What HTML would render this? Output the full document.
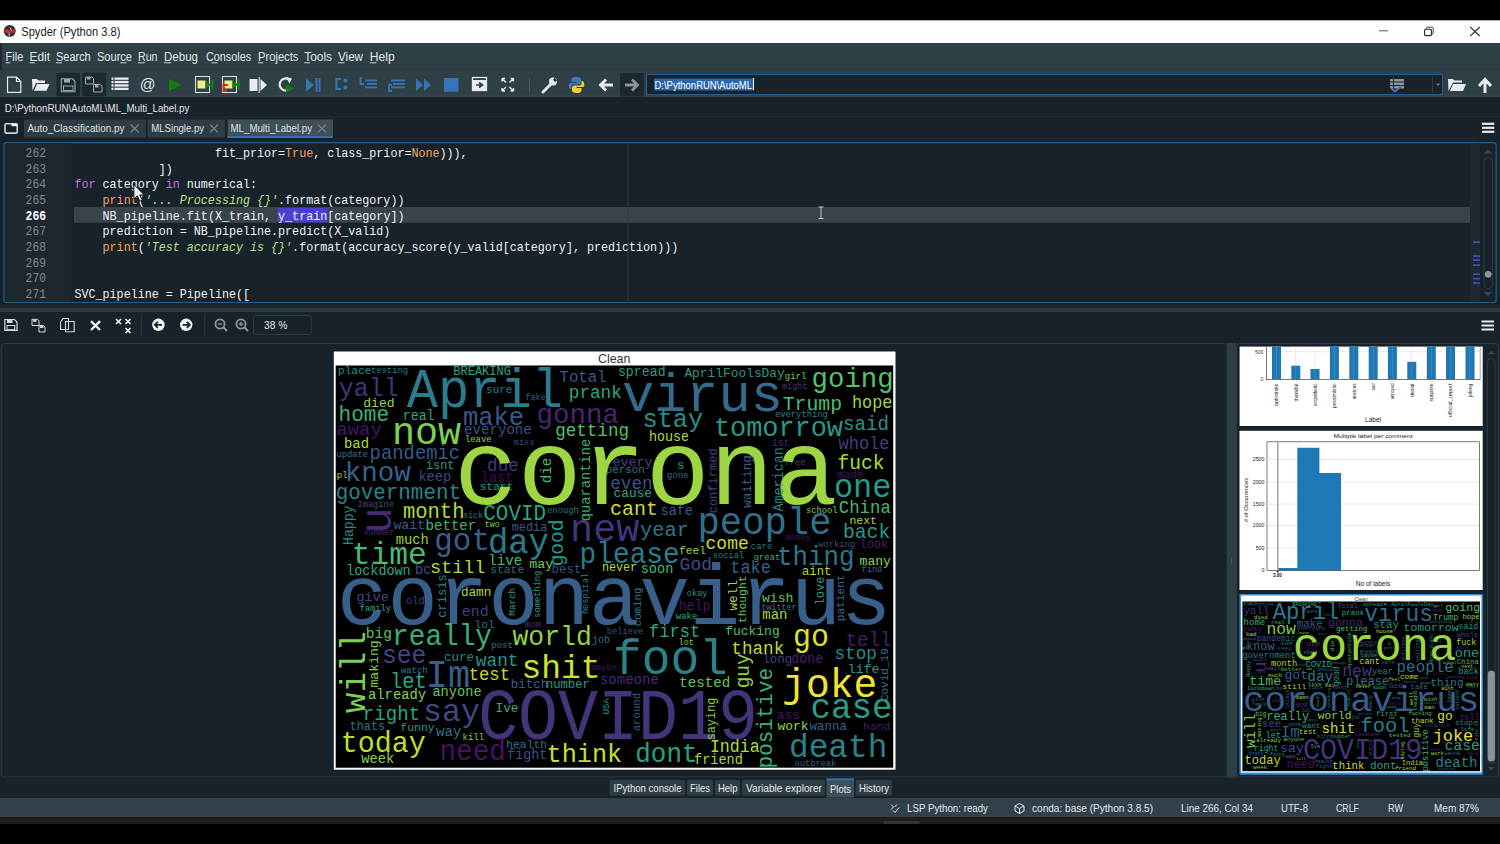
<!DOCTYPE html>
<html><head><meta charset="utf-8"><title>Spyder</title>
<style>
*{margin:0;padding:0}
html,body{width:1500px;height:844px;overflow:hidden;background:#000}
svg{display:block}
text{white-space:pre}
</style></head><body>
<svg width="1500" height="844" viewBox="0 0 1500 844">
<rect x="0" y="0" width="1500" height="20" fill="#000" />
<rect x="0" y="20" width="1500" height="23" fill="#fff" />
<circle cx="9.7" cy="31" r="6" fill="#303030"/>
<path d="M4 30 Q6 28.6 8.5 29.5 L11.5 31.6 L14.5 28.8 Q15.8 29.8 15.7 31.5 Q14.5 33 11.8 32.8 L9.8 32.6 L6.5 33.2 Q4.6 32.6 4 30 Z" fill="#d42a20"/>
<path d="M10 27.3 L11.9 31 M9 32.6 L9.4 36.5" stroke="#d8d8d8" stroke-width="0.9"/>
<text x="21.20" y="36.00" font-size="12.5" fill="#1a1a1a" font-family='"Liberation Sans",sans-serif' textLength="99.30" lengthAdjust="spacingAndGlyphs" >Spyder (Python 3.8)</text>
<rect x="0" y="20" width="1500" height="0.8" fill="#9a9a9a" />
<rect x="1379" y="30.3" width="9.2" height="1" fill="#555" />
<rect x="1424.6" y="29.2" width="6.8" height="6.4" rx="1" fill="none" stroke="#222" stroke-width="1.1"/>
<path d="M1426.2 28.6 V28 Q1426.2 27.2 1427.2 27.2 H1432 Q1433.2 27.2 1433.2 28.4 V33 Q1433.2 34 1432 34" fill="none" stroke="#444" stroke-width="1"/>
<path d="M1470.2 27 L1479.8 36 M1479.8 27 L1470.2 36" stroke="#333" stroke-width="1.1"/>
<rect x="0" y="43" width="1500" height="26.5" fill="#2f3f46" />
<rect x="0" y="43" width="2" height="26.5" fill="#1f2a30" />
<rect x="0" y="69" width="1500" height="1" fill="#26343a" />
<text x="5.60" y="60.70" font-size="12" fill="#e4e7e9" font-family='"Liberation Sans",sans-serif' textLength="17.70" lengthAdjust="spacingAndGlyphs" >File</text>
<rect x="5.6" y="62.3" width="4.6" height="1" fill="#c9ced1" />
<text x="29.60" y="60.70" font-size="12" fill="#e4e7e9" font-family='"Liberation Sans",sans-serif' textLength="20.40" lengthAdjust="spacingAndGlyphs" >Edit</text>
<rect x="29.6" y="62.3" width="5.4" height="1" fill="#c9ced1" />
<text x="56.00" y="60.70" font-size="12" fill="#e4e7e9" font-family='"Liberation Sans",sans-serif' textLength="34.70" lengthAdjust="spacingAndGlyphs" >Search</text>
<rect x="56.0" y="62.3" width="6.1" height="1" fill="#c9ced1" />
<text x="97.00" y="60.70" font-size="12" fill="#e4e7e9" font-family='"Liberation Sans",sans-serif' textLength="35.00" lengthAdjust="spacingAndGlyphs" >Source</text>
<rect x="120.3" y="62.3" width="6.1" height="1" fill="#c9ced1" />
<text x="138.00" y="60.70" font-size="12" fill="#e4e7e9" font-family='"Liberation Sans",sans-serif' textLength="19.50" lengthAdjust="spacingAndGlyphs" >Run</text>
<rect x="138.0" y="62.3" width="6.8" height="1" fill="#c9ced1" />
<text x="164.00" y="60.70" font-size="12" fill="#e4e7e9" font-family='"Liberation Sans",sans-serif' textLength="34.00" lengthAdjust="spacingAndGlyphs" >Debug</text>
<rect x="164.0" y="62.3" width="7.1" height="1" fill="#c9ced1" />
<text x="205.90" y="60.70" font-size="12" fill="#e4e7e9" font-family='"Liberation Sans",sans-serif' textLength="45.40" lengthAdjust="spacingAndGlyphs" >Consoles</text>
<rect x="211.6" y="62.3" width="6.0" height="1" fill="#c9ced1" />
<text x="258.00" y="60.70" font-size="12" fill="#e4e7e9" font-family='"Liberation Sans",sans-serif' textLength="40.40" lengthAdjust="spacingAndGlyphs" >Projects</text>
<rect x="258.0" y="62.3" width="5.3" height="1" fill="#c9ced1" />
<text x="304.20" y="60.70" font-size="12" fill="#e4e7e9" font-family='"Liberation Sans",sans-serif' textLength="27.80" lengthAdjust="spacingAndGlyphs" >Tools</text>
<rect x="304.2" y="62.3" width="5.8" height="1" fill="#c9ced1" />
<text x="338.00" y="60.70" font-size="12" fill="#e4e7e9" font-family='"Liberation Sans",sans-serif' textLength="25.00" lengthAdjust="spacingAndGlyphs" >View</text>
<rect x="338.0" y="62.3" width="6.6" height="1" fill="#c9ced1" />
<text x="369.80" y="60.70" font-size="12" fill="#e4e7e9" font-family='"Liberation Sans",sans-serif' textLength="24.80" lengthAdjust="spacingAndGlyphs" >Help</text>
<rect x="369.8" y="62.3" width="6.5" height="1" fill="#c9ced1" />
<rect x="0" y="70" width="1500" height="27" fill="#2f3f46" />
<rect x="0" y="94.5" width="1500" height="2.5" fill="#34424a" />
<path d="M7.5 77.2 H16.5 L20.8 81.5 V92.3 H7.5 Z M16.5 77.2 V81.5 H20.8" fill="none" stroke="#e8ecee" stroke-width="1.2"/>
<path d="M32 79 H37 L38.5 80.5 H45 V83 H36 L32.5 90.8 Z" fill="#e8ecee"/><path d="M34 90.8 L37 84 H49.6 L46.5 90.8 Z" fill="#e8ecee"/>
<rect x="56.5" y="72.7" width="23.5" height="23.8" rx="2" fill="#1c2830"/>
<rect x="82.3" y="72.7" width="23.8" height="23.8" rx="2" fill="#1c2830"/>
<path d="M61.3 78.8 H72.5 L75 81.3 V91.7 H61.3 Z" fill="none" stroke="#9ea7ac" stroke-width="1.1"/><rect x="64" y="79" width="6" height="3.5" fill="#9ea7ac"/><rect x="63.5" y="86" width="9.5" height="4.5" fill="none" stroke="#9ea7ac" stroke-width="1"/>
<path d="M85.5 77 H92 L93.5 78.5 V84 H85.5 Z M93.5 84.5 H100.5 L102 86 V92 H93.5 Z" fill="none" stroke="#9ea7ac" stroke-width="1"/><rect x="87" y="77" width="3.5" height="2.5" fill="#9ea7ac"/><rect x="95" y="85" width="3.5" height="2.5" fill="#9ea7ac"/>
<rect x="111.5" y="77.5" width="2" height="2.3" fill="#e8ecee" />
<rect x="114.5" y="77.5" width="14" height="2.3" fill="#e8ecee" />
<rect x="111.5" y="80.9" width="2" height="2.3" fill="#e8ecee" />
<rect x="114.5" y="80.9" width="14" height="2.3" fill="#e8ecee" />
<rect x="111.5" y="84.3" width="2" height="2.3" fill="#e8ecee" />
<rect x="114.5" y="84.3" width="14" height="2.3" fill="#e8ecee" />
<rect x="111.5" y="87.7" width="2" height="2.3" fill="#e8ecee" />
<rect x="114.5" y="87.7" width="14" height="2.3" fill="#e8ecee" />
<text x="139.80" y="90.00" font-size="16.5" fill="#dfe3e5" font-family='"Liberation Sans",sans-serif' textLength="15.80" lengthAdjust="spacingAndGlyphs" >@</text>
<path d="M169 79 L182 85 L169 91 Z" fill="#12800e"/>
<rect x="195.5" y="76.5" width="14" height="16" fill="none" stroke="#d8dcdc" stroke-width="1.1"/><rect x="197.5" y="80.5" width="8" height="8" fill="#f5e98a"/><path d="M205.5 80.5 L211 84.5 L205.5 88.5 Z" fill="#12800e"/><rect x="211.5" y="79.5" width="2" height="10" fill="#12800e"/>
<rect x="222.5" y="76.5" width="14" height="16" fill="none" stroke="#d8dcdc" stroke-width="1.1"/><rect x="224.5" y="80.5" width="8" height="8" fill="#f5e98a"/><path d="M232.5 80.5 L238 84.5 L232.5 88.5 Z" fill="#12800e"/><rect x="238" y="79.5" width="2" height="10" fill="#12800e"/><path d="M228 85 H223.5 V91 H227" fill="none" stroke="#e8221a" stroke-width="2"/>
<rect x="249.5" y="79" width="8" height="12" fill="#e8ecee"/><rect x="258.5" y="77" width="1.5" height="16" fill="#b0b8bb"/><path d="M260.5 79 L267 85 L260.5 91 Z" fill="#e8ecee"/>
<path d="M289 79.5 A6 6 0 1 0 290.5 88" fill="none" stroke="#e8ecee" stroke-width="2.2"/><path d="M286 77 L292 78.5 L289.5 83.5 Z" fill="#e8ecee"/><path d="M286 84.5 L294 88.5 L286 92.5 Z" fill="#12800e"/>
<path d="M306 78.5 L314 85 L306 91.5 Z" fill="#3574b5"/><rect x="315.5" y="78" width="2" height="14" fill="#3574b5"/><rect x="318.5" y="78" width="2" height="14" fill="#3574b5"/>
<path d="M341 79 H336.5 V89 H341" fill="none" stroke="#3574b5" stroke-width="2.2"/><circle cx="345.5" cy="80.5" r="2" fill="#3574b5"/><circle cx="345.5" cy="87.5" r="2" fill="#3574b5"/>
<path d="M362 78 H360.5 V84 H364" fill="none" stroke="#3574b5" stroke-width="1.8"/><rect x="365" y="79.5" width="12" height="1.8" fill="#3574b5"/><rect x="367" y="83" width="10" height="1.8" fill="#3574b5"/><rect x="365" y="86.5" width="12" height="1.8" fill="#3574b5"/>
<rect x="391" y="79.5" width="14" height="1.8" fill="#3574b5"/><rect x="393" y="83" width="12" height="1.8" fill="#3574b5"/><rect x="391" y="86.5" width="14" height="1.8" fill="#3574b5"/><path d="M392 85 H389 V91 H392" fill="none" stroke="#3574b5" stroke-width="1.8"/>
<path d="M416 78.5 L423 85 L416 91.5 Z M424 78.5 L431 85 L424 91.5 Z" fill="#3574b5"/>
<rect x="444" y="78" width="14.5" height="13.8" fill="#3574b5" />
<rect x="472.5" y="77.5" width="14" height="13" fill="none" stroke="#e8ecee" stroke-width="1.3"/><rect x="473" y="80" width="13" height="10.5" fill="#e8ecee"/><path d="M476 85 H481 M479 82.5 L482.5 85 L479 87.5" fill="none" stroke="#2f3f46" stroke-width="1.6"/>
<path d="M502 78.5 L506 82.5 M502 78.5 H505 M502 78.5 V81.5 M513.5 78.5 L509.5 82.5 M513.5 78.5 H510.5 M513.5 78.5 V81.5 M502 91 L506 87 M502 91 H505 M502 91 V88 M513.5 91 L509.5 87 M513.5 91 H510.5 M513.5 91 V88" fill="none" stroke="#e8ecee" stroke-width="1.4"/>
<rect x="529" y="78" width="1" height="14" fill="#4a5a62" />
<path d="M543 92 L551 84" stroke="#e8ecee" stroke-width="3" stroke-linecap="round"/><circle cx="553" cy="81.5" r="4" fill="#e8ecee"/><path d="M554.5 77.5 L557.5 80.5 L555 82 L553 80 Z" fill="#2f3f46"/>
<path d="M576.5 77 C572 77 571.5 78.5 571.5 80 V82 H576.5 V83 H570 C568.5 83 568.5 85.5 569 87 C569.5 88.5 570 89 571.5 89 V86.5 C571.5 85 573 84.5 574 84.5 H578.5 C580 84.5 581 83.5 581 82 V79.5 C581 78 579.5 77 576.5 77 Z" fill="#3d7ab8"/><path d="M576.5 93 C581 93 581.5 91.5 581.5 90 V88 H576.5 V87 H583 C584.5 87 584.5 84.5 584 83 C583.5 81.5 583 81 581.5 81 V83.5 C581.5 85 580 85.5 579 85.5 H574.5 C573 85.5 572 86.5 572 88 V90.5 C572 92 573.5 93 576.5 93 Z" fill="#f2cc3a"/>
<path d="M613 85 H601 M606 79.5 L600.5 85 L606 90.5" fill="none" stroke="#e8ecee" stroke-width="2.8"/>
<rect x="620" y="73" width="24" height="23.5" rx="2" fill="#1c2830"/>
<path d="M625 85 H637 M632 79.5 L637.5 85 L632 90.5" fill="none" stroke="#8c9599" stroke-width="2.8"/>
<rect x="646.5" y="74.5" width="796" height="20" rx="2" fill="#18222a" stroke="#1e5f8f" stroke-width="1.2"/>
<rect x="654" y="78.5" width="100" height="12" fill="#2867b0" />
<text x="654.50" y="88.50" font-size="11" fill="#ffffff" font-family='"Liberation Sans",sans-serif' textLength="97.50" lengthAdjust="spacingAndGlyphs" >D:\PythonRUN\AutoML</text>
<rect x="753" y="78" width="1" height="12" fill="#ffffff" />
<rect x="1390" y="79.0" width="3" height="2.5" fill="#8c9599" />
<rect x="1394" y="79.0" width="10" height="2.5" fill="#8c9599" />
<rect x="1390" y="82.5" width="3" height="2.5" fill="#8c9599" />
<rect x="1394" y="82.5" width="10" height="2.5" fill="#8c9599" />
<rect x="1390" y="86.0" width="3" height="2.5" fill="#8c9599" />
<rect x="1394" y="86.0" width="10" height="2.5" fill="#8c9599" />
<path d="M1391 88 L1395 91.5 L1402 85.5" fill="none" stroke="#3a7bc0" stroke-width="1.8"/>
<rect x="1432" y="76" width="1" height="17" fill="#2c3a42" />
<path d="M1435.5 83.5 L1440.5 83.5 L1438 86 Z" fill="#6c777c"/>
<path d="M1448 79 H1453 L1454.5 80.5 H1462 V82.5 H1453 L1448.5 91 Z" fill="#e8ecee"/><path d="M1450 91 L1453 84 H1466 L1463 91 Z" fill="#e8ecee"/>
<path d="M1485 93 V80 M1479 86 L1485 79.5 L1491 86" fill="none" stroke="#e8ecee" stroke-width="3"/>
<rect x="0" y="97" width="1500" height="20" fill="#18222a" />
<text x="4.70" y="112.30" font-size="11" fill="#e4e7e9" font-family='"Liberation Sans",sans-serif' textLength="184.60" lengthAdjust="spacingAndGlyphs" >D:\PythonRUN\AutoML\ML_Multi_Label.py</text>
<rect x="0" y="117" width="1500" height="25.5" fill="#18222a" />
<rect x="0" y="116.5" width="1500" height="1" fill="#222e36" />
<rect x="0" y="118" width="23.4" height="21" rx="3" fill="#17212a"/>
<rect x="5" y="123.8" width="12.2" height="9.3" rx="1.2" fill="none" stroke="#cdd1d4" stroke-width="1.6"/><rect x="11.5" y="123.6" width="5.8" height="2.6" fill="#f0f2f3"/>
<rect x="24" y="119.5" width="122" height="18" fill="#2e3d45"/>
<text x="27.50" y="132.20" font-size="11" fill="#dfe3e6" font-family='"Liberation Sans",sans-serif' textLength="96.90" lengthAdjust="spacingAndGlyphs" >Auto_Classification.py</text>
<path d="M130.7 124.5 L138.8 132.5 M138.8 124.5 L130.7 132.5" stroke="#76828a" stroke-width="1.1"/>
<rect x="147.5" y="119.5" width="77.5" height="18" fill="#2e3d45"/>
<text x="151.20" y="132.20" font-size="11" fill="#dfe3e6" font-family='"Liberation Sans",sans-serif' textLength="53.00" lengthAdjust="spacingAndGlyphs" >MLSingle.py</text>
<path d="M210 124.5 L218 132.5 M218 124.5 L210 132.5" stroke="#76828a" stroke-width="1.1"/>
<rect x="227.5" y="119.5" width="105.5" height="18" fill="#3f4f58"/>
<rect x="227.5" y="136" width="105.5" height="2" fill="#2f6fb5" />
<text x="230.50" y="132.20" font-size="11" fill="#dfe3e6" font-family='"Liberation Sans",sans-serif' textLength="81.50" lengthAdjust="spacingAndGlyphs" >ML_Multi_Label.py</text>
<path d="M317.8 124.5 L326 132.5 M326 124.5 L317.8 132.5" stroke="#76828a" stroke-width="1.1"/>
<rect x="336" y="138.3" width="1141" height="1" fill="#222e36" />
<rect x="1482" y="122.7" width="12.3" height="2.2" fill="#e8ecee" />
<rect x="1482" y="126.7" width="12.3" height="2.2" fill="#e8ecee" />
<rect x="1482" y="130.7" width="12.3" height="2.2" fill="#e8ecee" />
<rect x="0" y="142" width="1500" height="161.5" fill="#18222a" />
<rect x="4" y="142.6" width="1492.2" height="160" rx="2.5" fill="#18222a" stroke="#1e5f8f" stroke-width="1.2"/>
<rect x="5" y="143.3" width="66" height="158.6" fill="#1d272f" />
<rect x="74" y="207" width="1396" height="15.8" fill="#39434b" />
<rect x="277.6" y="208" width="49.9" height="14.4" fill="#4a3fcf" />
<text x="25.60" y="156.92" font-size="12.3" fill="#80888d" font-family='"Liberation Mono",monospace' textLength="20.40" lengthAdjust="spacingAndGlyphs" >262</text>
<text x="25.60" y="172.59" font-size="12.3" fill="#80888d" font-family='"Liberation Mono",monospace' textLength="20.40" lengthAdjust="spacingAndGlyphs" >263</text>
<text x="25.60" y="188.26" font-size="12.3" fill="#80888d" font-family='"Liberation Mono",monospace' textLength="20.40" lengthAdjust="spacingAndGlyphs" >264</text>
<text x="25.60" y="203.93" font-size="12.3" fill="#80888d" font-family='"Liberation Mono",monospace' textLength="20.40" lengthAdjust="spacingAndGlyphs" >265</text>
<text x="25.60" y="219.60" font-size="12.3" fill="#ffffff" font-family='"Liberation Mono",monospace' textLength="20.40" lengthAdjust="spacingAndGlyphs" font-weight="bold" >266</text>
<text x="25.60" y="235.27" font-size="12.3" fill="#80888d" font-family='"Liberation Mono",monospace' textLength="20.40" lengthAdjust="spacingAndGlyphs" >267</text>
<text x="25.60" y="250.94" font-size="12.3" fill="#80888d" font-family='"Liberation Mono",monospace' textLength="20.40" lengthAdjust="spacingAndGlyphs" >268</text>
<text x="25.60" y="266.61" font-size="12.3" fill="#80888d" font-family='"Liberation Mono",monospace' textLength="20.40" lengthAdjust="spacingAndGlyphs" >269</text>
<text x="25.60" y="282.28" font-size="12.3" fill="#80888d" font-family='"Liberation Mono",monospace' textLength="20.40" lengthAdjust="spacingAndGlyphs" >270</text>
<text x="25.60" y="297.95" font-size="12.3" fill="#80888d" font-family='"Liberation Mono",monospace' textLength="20.40" lengthAdjust="spacingAndGlyphs" >271</text>
<text x="214.90" y="156.92" font-size="12.2" fill="#f0f2f3" font-family='"Liberation Mono",monospace' textLength="70.20" lengthAdjust="spacingAndGlyphs" >fit_prior=</text>
<text x="285.10" y="156.92" font-size="12.2" fill="#f5a35a" font-family='"Liberation Mono",monospace' textLength="28.08" lengthAdjust="spacingAndGlyphs" >True</text>
<text x="313.18" y="156.92" font-size="12.2" fill="#f0f2f3" font-family='"Liberation Mono",monospace' textLength="98.28" lengthAdjust="spacingAndGlyphs" >, class_prior=</text>
<text x="411.46" y="156.92" font-size="12.2" fill="#f5a35a" font-family='"Liberation Mono",monospace' textLength="28.08" lengthAdjust="spacingAndGlyphs" >None</text>
<text x="439.54" y="156.92" font-size="12.2" fill="#f0f2f3" font-family='"Liberation Mono",monospace' textLength="21.06" lengthAdjust="spacingAndGlyphs" >)))</text>
<text x="460.60" y="156.92" font-size="12.2" fill="#f0f2f3" font-family='"Liberation Mono",monospace' textLength="7.02" lengthAdjust="spacingAndGlyphs" >,</text>
<text x="158.74" y="172.59" font-size="12.2" fill="#f0f2f3" font-family='"Liberation Mono",monospace' textLength="14.04" lengthAdjust="spacingAndGlyphs" >])</text>
<text x="74.50" y="188.26" font-size="12.2" fill="#c670e0" font-family='"Liberation Mono",monospace' textLength="21.06" lengthAdjust="spacingAndGlyphs" >for</text>
<text x="102.58" y="188.26" font-size="12.2" fill="#f0f2f3" font-family='"Liberation Mono",monospace' textLength="56.16" lengthAdjust="spacingAndGlyphs" >category</text>
<text x="165.76" y="188.26" font-size="12.2" fill="#c670e0" font-family='"Liberation Mono",monospace' textLength="14.04" lengthAdjust="spacingAndGlyphs" >in</text>
<text x="186.82" y="188.26" font-size="12.2" fill="#f0f2f3" font-family='"Liberation Mono",monospace' textLength="70.20" lengthAdjust="spacingAndGlyphs" >numerical:</text>
<text x="102.58" y="203.93" font-size="12.2" fill="#f5a35a" font-family='"Liberation Mono",monospace' textLength="35.10" lengthAdjust="spacingAndGlyphs" >print</text>
<text x="137.68" y="203.93" font-size="12.2" fill="#f0f2f3" font-family='"Liberation Mono",monospace' textLength="7.02" lengthAdjust="spacingAndGlyphs" >(</text>
<text x="144.70" y="203.93" font-size="12.2" fill="#b8e08a" font-family='"Liberation Mono",monospace' textLength="133.38" lengthAdjust="spacingAndGlyphs" font-style="italic" >&#x27;... Processing {}&#x27;</text>
<text x="278.08" y="203.93" font-size="12.2" fill="#f0f2f3" font-family='"Liberation Mono",monospace' textLength="126.36" lengthAdjust="spacingAndGlyphs" >.format(category))</text>
<text x="102.58" y="219.60" font-size="12.2" fill="#f0f2f3" font-family='"Liberation Mono",monospace' textLength="168.48" lengthAdjust="spacingAndGlyphs" >NB_pipeline.fit(X_train,</text>
<text x="278.08" y="219.60" font-size="12.2" fill="#f0f2f3" font-family='"Liberation Mono",monospace' textLength="49.14" lengthAdjust="spacingAndGlyphs" >y_train</text>
<text x="327.22" y="219.60" font-size="12.2" fill="#f0f2f3" font-family='"Liberation Mono",monospace' textLength="77.22" lengthAdjust="spacingAndGlyphs" >[category])</text>
<text x="102.58" y="235.27" font-size="12.2" fill="#f0f2f3" font-family='"Liberation Mono",monospace' textLength="287.82" lengthAdjust="spacingAndGlyphs" >prediction = NB_pipeline.predict(X_valid)</text>
<text x="102.58" y="250.94" font-size="12.2" fill="#f5a35a" font-family='"Liberation Mono",monospace' textLength="35.10" lengthAdjust="spacingAndGlyphs" >print</text>
<text x="137.68" y="250.94" font-size="12.2" fill="#f0f2f3" font-family='"Liberation Mono",monospace' textLength="7.02" lengthAdjust="spacingAndGlyphs" >(</text>
<text x="144.70" y="250.94" font-size="12.2" fill="#b8e08a" font-family='"Liberation Mono",monospace' textLength="147.42" lengthAdjust="spacingAndGlyphs" font-style="italic" >&#x27;Test accuracy is {}&#x27;</text>
<text x="292.12" y="250.94" font-size="12.2" fill="#f0f2f3" font-family='"Liberation Mono",monospace' textLength="386.10" lengthAdjust="spacingAndGlyphs" >.format(accuracy_score(y_valid[category], prediction)))</text>
<text x="74.50" y="297.95" font-size="12.2" fill="#f0f2f3" font-family='"Liberation Mono",monospace' textLength="175.50" lengthAdjust="spacingAndGlyphs" >SVC_pipeline = Pipeline([</text>
<rect x="627.5" y="143.5" width="1" height="158" fill="#2c3840" />
<rect x="1470" y="143.5" width="10" height="158" fill="#1d2830" />
<path d="M1483.5 153.5 L1488 149.5 L1492.5 153.5 Z" fill="#3b4750"/>
<path d="M1483.5 292 L1488 296 L1492.5 292 Z" fill="#3b4750"/>
<rect x="1484" y="157.5" width="8.5" height="131" rx="4" fill="none" stroke="#2d3a42" stroke-width="1"/>
<circle cx="1488.2" cy="274.3" r="3.4" fill="#8a949a"/>
<rect x="1473" y="241.3" width="7" height="1.6" fill="#4d4bc6" />
<rect x="1473" y="255.3" width="7" height="1.6" fill="#4d4bc6" />
<rect x="1473" y="259.3" width="7" height="1.6" fill="#4d4bc6" />
<rect x="1473" y="264.3" width="7" height="1.6" fill="#4d4bc6" />
<rect x="1473" y="273.3" width="7" height="1.6" fill="#4d4bc6" />
<rect x="1473" y="277.8" width="7" height="1.6" fill="#4d4bc6" />
<rect x="1473" y="282.3" width="7" height="1.6" fill="#4d4bc6" />
<path d="M133.9 184.5 L133.9 199 L137.3 195.8 L139.8 201.2 L142.2 200.1 L139.7 194.9 L144.2 194.9 Z" fill="#f2f2f2" stroke="#111" stroke-width="0.9"/>
<path d="M818.5 207 H823.5 M818.5 218.5 H823.5 M821 207 V218.5" stroke="#c8ccce" stroke-width="1"/>
<rect x="0" y="303.2" width="1500" height="1.8" fill="#18222a" />
<rect x="0" y="305" width="1500" height="2.8" fill="#1e2933" />
<rect x="0" y="307.8" width="1500" height="4.2" fill="#2f3b43" />
<rect x="0" y="312" width="1500" height="31" fill="#18222a" />
<path d="M4.8 319.5 H14.5 L17 322 V330.3 H4.8 Z" fill="none" stroke="#d5d9db" stroke-width="1.2"/><rect x="7" y="319.6" width="5.5" height="3.4" fill="#d5d9db"/><rect x="7" y="325.5" width="7.8" height="4.2" fill="none" stroke="#d5d9db" stroke-width="1"/>
<path d="M32 319.3 H37.5 L39 320.8 V325.5 H32 Z M39 325.5 H43.5 L45 327 V332 H39 Z" fill="none" stroke="#d5d9db" stroke-width="1"/><rect x="33" y="319.5" width="3.5" height="2.2" fill="#d5d9db"/><rect x="40" y="326" width="3.5" height="2" fill="#d5d9db"/>
<path d="M60.6 322 L63 318.5 H68.5 V329.5 H60.6 Z M65.5 321.5 H74.2 V331.7 H65.5 Z" fill="#18222a" stroke="#d5d9db" stroke-width="1.1"/>
<path d="M91 321.2 L100 330 M100 321.2 L91 330" stroke="#f4f6f7" stroke-width="2.4"/>
<path d="M116 319 L121 324 M121 319 L116 324 M125.5 319 L130.5 324 M130.5 319 L125.5 324 M125.5 328 L130.5 333 M130.5 328 L125.5 333" stroke="#f4f6f7" stroke-width="1.6"/>
<rect x="140.8" y="313.7" width="1" height="22.8" fill="#2c3840" />
<circle cx="158.4" cy="324.8" r="6.2" fill="#f6f7f8"/><path d="M162 324.8 H155 M157.8 321.8 L154.8 324.8 L157.8 327.8" fill="none" stroke="#18222a" stroke-width="1.8"/>
<circle cx="186.2" cy="324.8" r="6.2" fill="#f6f7f8"/><path d="M182.6 324.8 H189.6 M186.8 321.8 L189.8 324.8 L186.8 327.8" fill="none" stroke="#18222a" stroke-width="1.8"/>
<rect x="204.3" y="313.7" width="1" height="22.8" fill="#2c3840" />
<circle cx="220" cy="324" r="4.6" fill="none" stroke="#8d969b" stroke-width="1.8"/><path d="M223.3 327.3 L227 331" stroke="#8d969b" stroke-width="2"/><path d="M217.8 324 H222.2" stroke="#8d969b" stroke-width="1.4"/>
<circle cx="241" cy="324" r="4.6" fill="none" stroke="#8d969b" stroke-width="1.8"/><path d="M244.3 327.3 L248 331" stroke="#8d969b" stroke-width="2"/><path d="M238.8 324 H243.2 M241 321.8 V326.2" stroke="#8d969b" stroke-width="1.4"/>
<rect x="253.5" y="315.5" width="57.8" height="19" rx="2.5" fill="none" stroke="#2c3a42" stroke-width="1"/>
<text x="263.90" y="329.10" font-size="10.8" fill="#e4e7e9" font-family='"Liberation Sans",sans-serif' textLength="23.60" lengthAdjust="spacingAndGlyphs" >38 %</text>
<rect x="1481.5" y="320.5" width="12.5" height="2" fill="#e8ecee" />
<rect x="1481.5" y="324.5" width="12.5" height="2" fill="#e8ecee" />
<rect x="1481.5" y="328.5" width="12.5" height="2" fill="#e8ecee" />
<rect x="0" y="343" width="1500" height="435" fill="#18222a" />
<rect x="1.2" y="343.5" width="1226" height="433.5" rx="3" fill="#18222a" stroke="#2f3c44" stroke-width="1"/>
<rect x="1227" y="343" width="9.3" height="435" fill="#2f3d45" />
<rect x="1231" y="558.3" width="0.8" height="5" fill="#55636b" />
<rect x="1236.5" y="343.5" width="262" height="433.5" rx="3" fill="#18222a" stroke="#2f3c44" stroke-width="1"/>
<rect x="0" y="777.5" width="1500" height="20.5" fill="#18222a" />
<rect x="609.6" y="780" width="75.39999999999998" height="15.6" rx="1.5" fill="#2e3d45"/>
<text x="613.50" y="791.80" font-size="10.8" fill="#e8eaec" font-family='"Liberation Sans",sans-serif' textLength="68.00" lengthAdjust="spacingAndGlyphs" >IPython console</text>
<rect x="687" y="780" width="26" height="15.6" rx="1.5" fill="#2e3d45"/>
<text x="690.00" y="791.80" font-size="10.8" fill="#e8eaec" font-family='"Liberation Sans",sans-serif' textLength="20.00" lengthAdjust="spacingAndGlyphs" >Files</text>
<rect x="715" y="780" width="25" height="15.6" rx="1.5" fill="#2e3d45"/>
<text x="718.00" y="791.80" font-size="10.8" fill="#e8eaec" font-family='"Liberation Sans",sans-serif' textLength="19.50" lengthAdjust="spacingAndGlyphs" >Help</text>
<rect x="742" y="780" width="83" height="15.6" rx="1.5" fill="#2e3d45"/>
<text x="746.00" y="791.80" font-size="10.8" fill="#e8eaec" font-family='"Liberation Sans",sans-serif' textLength="76.00" lengthAdjust="spacingAndGlyphs" >Variable explorer</text>
<rect x="855.5" y="780" width="36.5" height="15.6" rx="1.5" fill="#2e3d45"/>
<text x="859.00" y="791.80" font-size="10.8" fill="#e8eaec" font-family='"Liberation Sans",sans-serif' textLength="30.00" lengthAdjust="spacingAndGlyphs" >History</text>
<rect x="826.5" y="778.5" width="27.5" height="19" rx="1.5" fill="#3f4f58"/>
<rect x="826.5" y="778.5" width="27.5" height="1.8" fill="#2f6fb5" />
<text x="830.00" y="793.00" font-size="10.8" fill="#e8eaec" font-family='"Liberation Sans",sans-serif' textLength="21.00" lengthAdjust="spacingAndGlyphs" >Plots</text>
<rect x="0" y="798" width="1500" height="19.3" fill="#31404a" />
<rect x="0" y="817.3" width="1500" height="6.6" fill="#1f1f1f" />
<rect x="0" y="823.9" width="1500" height="20.1" fill="#000" />
<text x="907.00" y="812.40" font-size="10.5" fill="#e6e8ea" font-family='"Liberation Sans",sans-serif' textLength="81.00" lengthAdjust="spacingAndGlyphs" >LSP Python: ready</text>
<text x="1032.00" y="812.40" font-size="10.5" fill="#e6e8ea" font-family='"Liberation Sans",sans-serif' textLength="121.00" lengthAdjust="spacingAndGlyphs" >conda: base (Python 3.8.5)</text>
<text x="1181.00" y="812.40" font-size="10.5" fill="#e6e8ea" font-family='"Liberation Sans",sans-serif' textLength="72.00" lengthAdjust="spacingAndGlyphs" >Line 266, Col 34</text>
<text x="1281.00" y="812.40" font-size="10.5" fill="#e6e8ea" font-family='"Liberation Sans",sans-serif' textLength="27.00" lengthAdjust="spacingAndGlyphs" >UTF-8</text>
<text x="1336.00" y="812.40" font-size="10.5" fill="#e6e8ea" font-family='"Liberation Sans",sans-serif' textLength="23.00" lengthAdjust="spacingAndGlyphs" >CRLF</text>
<text x="1388.00" y="812.40" font-size="10.5" fill="#e6e8ea" font-family='"Liberation Sans",sans-serif' textLength="15.00" lengthAdjust="spacingAndGlyphs" >RW</text>
<text x="1434.00" y="812.40" font-size="10.5" fill="#e6e8ea" font-family='"Liberation Sans",sans-serif' textLength="45.00" lengthAdjust="spacingAndGlyphs" >Mem 87%</text>
<path d="M891 804.5 L893.5 807 L891 809.5 M897 804.5 L894.5 807 M893 810.5 L895 812.5 L899 807.5" fill="none" stroke="#e6e8ea" stroke-width="1"/>
<path d="M1019.5 803.5 L1024 806 V811 L1019.5 813.5 L1015 811 V806 Z M1015 806 L1019.5 808.5 L1024 806 M1019.5 808.5 V813.5" fill="none" stroke="#e6e8ea" stroke-width="1"/>
<rect x="883" y="821" width="37" height="3" rx="1.5" fill="#333"/>
<rect x="333.8" y="351.5" width="561.7" height="418.2" fill="#ffffff" />
<text x="598.00" y="363.20" font-size="13" fill="#333333" font-family='"Liberation Sans",sans-serif' textLength="32.40" lengthAdjust="spacingAndGlyphs" >Clean</text>
<rect x="335.7" y="365.5" width="557.5" height="402.2" fill="#000000" />
<defs><clipPath id="cc"><rect x="335.7" y="365.5" width="557.5" height="402.2"/></clipPath></defs>
<g clip-path="url(#cc)"><g id="cw" font-family='"Liberation Mono",monospace'>
<text transform="translate(0 374.4) scale(1 1.035)" x="338.1" y="0" font-size="11.14" textLength="33.4" lengthAdjust="spacingAndGlyphs" fill="#258f8b">place</text>
<text transform="translate(0 372.8) scale(1 1.015)" x="370.9" y="0" font-size="8.85" textLength="37.2" lengthAdjust="spacingAndGlyphs" fill="#2b7c8c">testing</text>
<text transform="translate(0 375.0) scale(1 1.08)" x="453.3" y="0" font-size="12.00" textLength="57.6" lengthAdjust="spacingAndGlyphs" fill="#26a684">BREAKING</text>
<text transform="translate(0 407.0) scale(1 1.05)" x="406.8" y="0" font-size="52.09" textLength="156.3" lengthAdjust="spacingAndGlyphs" fill="#2b7c8c">April</text>
<text transform="translate(0 396.2) scale(1 1.035)" x="338.7" y="0" font-size="24.99" textLength="60.0" lengthAdjust="spacingAndGlyphs" fill="#44357b">yall</text>
<text transform="translate(0 407.2) scale(1 1.035)" x="363.2" y="0" font-size="13.10" textLength="31.4" lengthAdjust="spacingAndGlyphs" fill="#9dd642">died</text>
<text transform="translate(0 420.8) scale(1 1.035)" x="338.5" y="0" font-size="21.13" textLength="50.7" lengthAdjust="spacingAndGlyphs" fill="#37b17b">home</text>
<text transform="translate(0 419.9) scale(1 1.035)" x="402.7" y="0" font-size="13.29" textLength="31.9" lengthAdjust="spacingAndGlyphs" fill="#26a684">real</text>
<text transform="translate(0 392.8) scale(1 1.015)" x="486.1" y="0" font-size="10.92" textLength="26.2" lengthAdjust="spacingAndGlyphs" fill="#29838b">sure</text>
<text transform="translate(0 425.0) scale(1 1.035)" x="463.0" y="0" font-size="25.46" textLength="61.1" lengthAdjust="spacingAndGlyphs" fill="#395989">make</text>
<text transform="translate(0 435.0) scale(1 1.015)" x="336.4" y="0" font-size="18.92" textLength="45.4" lengthAdjust="spacingAndGlyphs" fill="#451462">away</text>
<text transform="translate(0 443.6) scale(1 1.015)" x="392.0" y="0" font-size="38.42" textLength="69.2" lengthAdjust="spacingAndGlyphs" fill="#7ccf55">now</text>
<text transform="translate(0 434.1) scale(1 1.015)" x="464.1" y="0" font-size="14.11" textLength="67.7" lengthAdjust="spacingAndGlyphs" fill="#3c5187">everyone</text>
<text transform="translate(0 442.1) scale(1 1.035)" x="464.9" y="0" font-size="8.92" textLength="26.8" lengthAdjust="spacingAndGlyphs" fill="#89d24d">leave</text>
<text transform="translate(0 448.3) scale(1 1.035)" x="344.0" y="0" font-size="13.97" textLength="25.1" lengthAdjust="spacingAndGlyphs" fill="#aad93a">bad</text>
<text transform="translate(0 458.7) scale(1 1.035)" x="369.6" y="0" font-size="18.88" textLength="90.6" lengthAdjust="spacingAndGlyphs" fill="#395989">pandemic</text>
<text transform="translate(0 456.8) scale(1 1.035)" x="336.4" y="0" font-size="8.80" textLength="31.7" lengthAdjust="spacingAndGlyphs" fill="#2f728c">update</text>
<text transform="translate(0 445.3) scale(1 1.015)" x="513.4" y="0" font-size="8.77" textLength="21.0" lengthAdjust="spacingAndGlyphs" fill="#414484">miss</text>
<text transform="translate(0 468.6) scale(1 1.015)" x="425.9" y="0" font-size="11.90" textLength="28.6" lengthAdjust="spacingAndGlyphs" fill="#269b87">isnt</text>
<text transform="translate(0 481.1) scale(1 1.035)" x="344.8" y="0" font-size="27.52" textLength="66.1" lengthAdjust="spacingAndGlyphs" fill="#35638b">know</text>
<text transform="translate(0 477.7) scale(1 1.035)" x="336.8" y="0" font-size="8.89" textLength="10.7" lengthAdjust="spacingAndGlyphs" fill="#9dd642">pl</text>
<text transform="translate(0 481.1) scale(1 1.035)" x="418.4" y="0" font-size="13.71" textLength="32.9" lengthAdjust="spacingAndGlyphs" fill="#3f4a85">keep</text>
<text transform="translate(0 471.1) scale(1 1.035)" x="487.1" y="0" font-size="17.64" textLength="31.8" lengthAdjust="spacingAndGlyphs" fill="#44357b">due</text>
<text transform="translate(0 481.5) scale(1 1.035)" x="480.8" y="0" font-size="13.57" textLength="32.6" lengthAdjust="spacingAndGlyphs" fill="#430958">last</text>
<text transform="translate(0 490.0) scale(1 1.015)" x="479.8" y="0" font-size="11.12" textLength="33.4" lengthAdjust="spacingAndGlyphs" fill="#269b87">start</text>
<text transform="translate(0 498.6) scale(1 1.015)" x="335.7" y="0" font-size="20.89" textLength="125.3" lengthAdjust="spacingAndGlyphs" fill="#29838b">government</text>
<text transform="translate(0 507.1) scale(1 1.05)" x="357.5" y="0" font-size="8.70" textLength="36.5" lengthAdjust="spacingAndGlyphs" fill="#3f4a85">Imagine</text>
<text transform="translate(0 381.8) scale(1 1.05)" x="559.6" y="0" font-size="15.65" textLength="46.9" lengthAdjust="spacingAndGlyphs" fill="#395989">Total</text>
<text transform="translate(0 376.1) scale(1 1.035)" x="617.9" y="0" font-size="13.26" textLength="47.7" lengthAdjust="spacingAndGlyphs" fill="#269b87">spread</text>
<text transform="translate(0 397.9) scale(1 1.035)" x="568.8" y="0" font-size="17.68" textLength="53.0" lengthAdjust="spacingAndGlyphs" fill="#26a684">prank</text>
<text transform="translate(0 399.8) scale(1 1.035)" x="525.5" y="0" font-size="8.38" textLength="20.1" lengthAdjust="spacingAndGlyphs" fill="#375f8a">fake</text>
<text transform="translate(0 411.3) scale(1 1.015)" x="621.9" y="0" font-size="53.71" textLength="161.1" lengthAdjust="spacingAndGlyphs" fill="#326b8b">virus</text>
<text transform="translate(0 422.6) scale(1 1.015)" x="536.5" y="0" font-size="27.48" textLength="82.4" lengthAdjust="spacingAndGlyphs" fill="#472572">gonna</text>
<text transform="translate(0 427.3) scale(1 1.015)" x="642.5" y="0" font-size="25.29" textLength="60.7" lengthAdjust="spacingAndGlyphs" fill="#258f8b">stay</text>
<text transform="translate(0 435.8) scale(1 1.015)" x="555.2" y="0" font-size="17.58" textLength="73.8" lengthAdjust="spacingAndGlyphs" fill="#52c06c">getting</text>
<text transform="translate(0 440.6) scale(1 1.035)" x="649.1" y="0" font-size="13.33" textLength="40.0" lengthAdjust="spacingAndGlyphs" fill="#b0db36">house</text>
<text transform="translate(0 466.2) scale(1 1.015)" x="612.4" y="0" font-size="13.41" textLength="40.2" lengthAdjust="spacingAndGlyphs" fill="#414484">every</text>
<text transform="translate(0 472.8) scale(1 1.015)" x="605.8" y="0" font-size="10.77" textLength="38.8" lengthAdjust="spacingAndGlyphs" fill="#2d778c">person</text>
<text transform="translate(0 469.0) scale(1 1.015)" x="676.7" y="0" font-size="13.08" textLength="7.8" lengthAdjust="spacingAndGlyphs" fill="#258f8b">s</text>
<text transform="translate(0 477.5) scale(1 1.015)" x="666.7" y="0" font-size="9.23" textLength="22.2" lengthAdjust="spacingAndGlyphs" fill="#326b8b">gone</text>
<text transform="translate(0 488.9) scale(1 1.015)" x="610.2" y="0" font-size="17.71" textLength="42.5" lengthAdjust="spacingAndGlyphs" fill="#3c5187">even</text>
<text transform="translate(0 497.4) scale(1 1.015)" x="613.5" y="0" font-size="12.85" textLength="38.6" lengthAdjust="spacingAndGlyphs" fill="#2daa80">cause</text>
<text transform="translate(0 514.5) scale(1 1.015)" x="610.1" y="0" font-size="19.97" textLength="47.9" lengthAdjust="spacingAndGlyphs" fill="#cadf2e">cant</text>
<text transform="translate(0 514.5) scale(1 1.035)" x="660.6" y="0" font-size="13.45" textLength="32.3" lengthAdjust="spacingAndGlyphs" fill="#375f8a">safe</text>
<text transform="translate(0 512.6) scale(1 1.035)" x="547.3" y="0" font-size="8.79" textLength="31.6" lengthAdjust="spacingAndGlyphs" fill="#2f728c">enough</text>
<text transform="translate(0 376.5) scale(1 1.05)" x="684.4" y="0" font-size="12.88" textLength="100.4" lengthAdjust="spacingAndGlyphs" fill="#269b87">AprilFoolsDay</text>
<text transform="translate(0 379.0) scale(1 1.035)" x="784.8" y="0" font-size="8.97" textLength="21.5" lengthAdjust="spacingAndGlyphs" fill="#7ccf55">girl</text>
<text transform="translate(0 387.2) scale(1 1.015)" x="811.6" y="0" font-size="27.35" textLength="82.0" lengthAdjust="spacingAndGlyphs" fill="#52c06c">going</text>
<text transform="translate(0 389.1) scale(1 1.035)" x="782.0" y="0" font-size="8.53" textLength="25.6" lengthAdjust="spacingAndGlyphs" fill="#44357b">might</text>
<text transform="translate(0 409.6) scale(1 1.05)" x="782.7" y="0" font-size="19.79" textLength="59.4" lengthAdjust="spacingAndGlyphs" fill="#48bd72">Trump</text>
<text transform="translate(0 407.6) scale(1 1.035)" x="851.9" y="0" font-size="16.89" textLength="40.5" lengthAdjust="spacingAndGlyphs" fill="#9dd642">hope</text>
<text transform="translate(0 417.3) scale(1 1.035)" x="775.0" y="0" font-size="8.80" textLength="52.8" lengthAdjust="spacingAndGlyphs" fill="#29838b">everything</text>
<text transform="translate(0 435.8) scale(1 1.015)" x="713.9" y="0" font-size="26.89" textLength="129.1" lengthAdjust="spacingAndGlyphs" fill="#269b87">tomorrow</text>
<text transform="translate(0 430.0) scale(1 1.035)" x="843.0" y="0" font-size="19.19" textLength="46.1" lengthAdjust="spacingAndGlyphs" fill="#259489">said</text>
<text transform="translate(0 445.5) scale(1 1.05)" x="772.0" y="0" font-size="9.60" textLength="17.3" lengthAdjust="spacingAndGlyphs" fill="#472572">1st</text>
<text transform="translate(0 449.4) scale(1 1.035)" x="838.6" y="0" font-size="16.96" textLength="50.9" lengthAdjust="spacingAndGlyphs" fill="#433e80">whole</text>
<text transform="translate(0 468.8) scale(1 1.035)" x="837.5" y="0" font-size="19.59" textLength="47.0" lengthAdjust="spacingAndGlyphs" fill="#aad93a">fuck</text>
<text transform="translate(0 465.0) scale(1 1.035)" x="784.8" y="0" font-size="8.56" textLength="20.5" lengthAdjust="spacingAndGlyphs" fill="#414484">free</text>
<text transform="translate(0 477.6) scale(1 1.035)" x="837.3" y="0" font-size="11.07" textLength="26.6" lengthAdjust="spacingAndGlyphs" fill="#451462">made</text>
<text transform="translate(0 497.0) scale(1 1.015)" x="833.9" y="0" font-size="31.96" textLength="57.5" lengthAdjust="spacingAndGlyphs" fill="#269b87">one</text>
<text transform="translate(0 512.5) scale(1 1.035)" x="806.0" y="0" font-size="8.72" textLength="31.4" lengthAdjust="spacingAndGlyphs" fill="#7ccf55">school</text>
<text transform="translate(0 513.4) scale(1 1.05)" x="838.8" y="0" font-size="17.35" textLength="52.0" lengthAdjust="spacingAndGlyphs" fill="#41b875">China</text>
<text transform="translate(0 524.0) scale(1 1.015)" x="849.5" y="0" font-size="11.41" textLength="27.4" lengthAdjust="spacingAndGlyphs" fill="#aad93a">next</text>
<text transform="translate(0 534.6) scale(1 1.015)" x="363.4" y="0" font-size="8.57" textLength="30.9" lengthAdjust="spacingAndGlyphs" fill="#472572">summer</text>
<text transform="translate(0 518.4) scale(1 1.035)" x="402.9" y="0" font-size="20.53" textLength="61.6" lengthAdjust="spacingAndGlyphs" fill="#b0db36">month</text>
<text transform="translate(0 517.5) scale(1 1.035)" x="462.9" y="0" font-size="8.38" textLength="20.1" lengthAdjust="spacingAndGlyphs" fill="#2f728c">sick</text>
<text transform="translate(0 520.0) scale(1 1.08)" x="483.3" y="0" font-size="20.94" textLength="62.8" lengthAdjust="spacingAndGlyphs" fill="#26a684">COVID</text>
<text transform="translate(0 528.9) scale(1 1.015)" x="393.4" y="0" font-size="13.25" textLength="31.8" lengthAdjust="spacingAndGlyphs" fill="#375f8a">wait</text>
<text transform="translate(0 529.8) scale(1 1.035)" x="425.5" y="0" font-size="14.11" textLength="50.8" lengthAdjust="spacingAndGlyphs" fill="#41b875">better</text>
<text transform="translate(0 527.1) scale(1 1.015)" x="484.7" y="0" font-size="8.40" textLength="15.1" lengthAdjust="spacingAndGlyphs" fill="#7ccf55">two</text>
<text transform="translate(0 530.6) scale(1 1.035)" x="511.7" y="0" font-size="11.89" textLength="35.7" lengthAdjust="spacingAndGlyphs" fill="#395989">media</text>
<text transform="translate(0 549.7) scale(1 1.015)" x="434.3" y="0" font-size="30.92" textLength="55.7" lengthAdjust="spacingAndGlyphs" fill="#375f8a">got</text>
<text transform="translate(0 553.1) scale(1 1.035)" x="487.9" y="0" font-size="33.95" textLength="61.1" lengthAdjust="spacingAndGlyphs" fill="#2b7c8c">day</text>
<text transform="translate(0 544.0) scale(1 1.035)" x="395.7" y="0" font-size="13.78" textLength="33.1" lengthAdjust="spacingAndGlyphs" fill="#9dd642">much</text>
<text transform="translate(0 563.9) scale(1 1.015)" x="351.7" y="0" font-size="31.32" textLength="75.2" lengthAdjust="spacingAndGlyphs" fill="#48bd72">time</text>
<text transform="translate(0 564.9) scale(1 1.035)" x="488.3" y="0" font-size="14.20" textLength="34.1" lengthAdjust="spacingAndGlyphs" fill="#48bd72">live</text>
<text transform="translate(0 574.9) scale(1 1.035)" x="346.2" y="0" font-size="13.44" textLength="64.5" lengthAdjust="spacingAndGlyphs" fill="#2daa80">lockdown</text>
<text transform="translate(0 574.4) scale(1 1.035)" x="415.1" y="0" font-size="13.66" textLength="16.4" lengthAdjust="spacingAndGlyphs" fill="#3c5187">bc</text>
<text transform="translate(0 573.4) scale(1 1.035)" x="429.9" y="0" font-size="18.55" textLength="55.6" lengthAdjust="spacingAndGlyphs" fill="#b0db36">still</text>
<text transform="translate(0 573.4) scale(1 1.015)" x="490.2" y="0" font-size="11.32" textLength="34.0" lengthAdjust="spacingAndGlyphs" fill="#326b8b">state</text>
<text transform="translate(0 624.3) scale(1 1.015)" x="337.0" y="0" font-size="84.01" textLength="554.5" lengthAdjust="spacingAndGlyphs" fill="#375f8a">coronavirus</text>
<text transform="translate(0 596.2) scale(1 1.035)" x="460.9" y="0" font-size="12.65" textLength="30.4" lengthAdjust="spacingAndGlyphs" fill="#aad93a">damn</text>
<text transform="translate(0 600.9) scale(1 1.015)" x="356.6" y="0" font-size="13.38" textLength="32.1" lengthAdjust="spacingAndGlyphs" fill="#3f4a85">give</text>
<text transform="translate(0 603.7) scale(1 1.035)" x="406.1" y="0" font-size="10.31" textLength="18.6" lengthAdjust="spacingAndGlyphs" fill="#433e80">old</text>
<text transform="translate(0 611.3) scale(1 1.035)" x="359.7" y="0" font-size="8.69" textLength="31.3" lengthAdjust="spacingAndGlyphs" fill="#2daa80">family</text>
<text transform="translate(0 616.1) scale(1 1.035)" x="461.7" y="0" font-size="14.93" textLength="26.9" lengthAdjust="spacingAndGlyphs" fill="#433e80">end</text>
<text transform="translate(0 628.3) scale(1 1.035)" x="474.5" y="0" font-size="11.15" textLength="20.1" lengthAdjust="spacingAndGlyphs" fill="#2f728c">lol</text>
<text transform="translate(0 637.5) scale(1 1.035)" x="365.7" y="0" font-size="14.57" textLength="26.2" lengthAdjust="spacingAndGlyphs" fill="#62c664">big</text>
<text transform="translate(0 645.4) scale(1 1.035)" x="392.1" y="0" font-size="27.75" textLength="99.9" lengthAdjust="spacingAndGlyphs" fill="#37b17b">really</text>
<text transform="translate(0 648.3) scale(1 1.015)" x="491.3" y="0" font-size="9.01" textLength="21.6" lengthAdjust="spacingAndGlyphs" fill="#2d778c">post</text>
<text transform="translate(0 541.2) scale(1 1.015)" x="570.1" y="0" font-size="38.42" textLength="69.2" lengthAdjust="spacingAndGlyphs" fill="#44357b">new</text>
<text transform="translate(0 536.4) scale(1 1.015)" x="640.1" y="0" font-size="20.41" textLength="49.0" lengthAdjust="spacingAndGlyphs" fill="#2d778c">year</text>
<text transform="translate(0 563.0) scale(1 1.035)" x="579.6" y="0" font-size="27.79" textLength="100.1" lengthAdjust="spacingAndGlyphs" fill="#2b7c8c">please</text>
<text transform="translate(0 553.5) scale(1 1.035)" x="678.9" y="0" font-size="11.24" textLength="27.0" lengthAdjust="spacingAndGlyphs" fill="#9dd642">feel</text>
<text transform="translate(0 567.7) scale(1 1.015)" x="529.3" y="0" font-size="13.27" textLength="23.9" lengthAdjust="spacingAndGlyphs" fill="#72cb5b">may</text>
<text transform="translate(0 573.4) scale(1 1.035)" x="551.6" y="0" font-size="12.40" textLength="29.8" lengthAdjust="spacingAndGlyphs" fill="#3c5187">best</text>
<text transform="translate(0 569.6) scale(1 1.05)" x="679.6" y="0" font-size="18.05" textLength="32.5" lengthAdjust="spacingAndGlyphs" fill="#3f4a85">God</text>
<text transform="translate(0 570.6) scale(1 1.015)" x="601.9" y="0" font-size="11.76" textLength="35.3" lengthAdjust="spacingAndGlyphs" fill="#bddd2e">never</text>
<text transform="translate(0 572.5) scale(1 1.015)" x="640.7" y="0" font-size="13.58" textLength="32.6" lengthAdjust="spacingAndGlyphs" fill="#48bd72">soon</text>
<text transform="translate(0 596.2) scale(1 1.035)" x="686.8" y="0" font-size="8.64" textLength="20.7" lengthAdjust="spacingAndGlyphs" fill="#258f8b">okay</text>
<text transform="translate(0 610.4) scale(1 1.035)" x="678.5" y="0" font-size="13.34" textLength="32.0" lengthAdjust="spacingAndGlyphs" fill="#451462">help</text>
<text transform="translate(0 618.9) scale(1 1.035)" x="675.8" y="0" font-size="8.95" textLength="21.5" lengthAdjust="spacingAndGlyphs" fill="#2daa80">wake</text>
<text transform="translate(0 626.5) scale(1 1.015)" x="524.8" y="0" font-size="8.88" textLength="16.0" lengthAdjust="spacingAndGlyphs" fill="#44357b">mom</text>
<text transform="translate(0 645.0) scale(1 1.035)" x="512.5" y="0" font-size="26.47" textLength="79.4" lengthAdjust="spacingAndGlyphs" fill="#90d349">world</text>
<text transform="translate(0 634.1) scale(1 1.035)" x="606.8" y="0" font-size="8.67" textLength="36.4" lengthAdjust="spacingAndGlyphs" fill="#3c5187">believe</text>
<text transform="translate(0 637.3) scale(1 1.035)" x="649.1" y="0" font-size="17.07" textLength="51.2" lengthAdjust="spacingAndGlyphs" fill="#2daa80">first</text>
<text transform="translate(0 643.0) scale(1 1.035)" x="591.9" y="0" font-size="10.15" textLength="18.3" lengthAdjust="spacingAndGlyphs" fill="#326b8b">job</text>
<text transform="translate(0 644.5) scale(1 1.035)" x="678.6" y="0" font-size="8.43" textLength="15.2" lengthAdjust="spacingAndGlyphs" fill="#89d24d">lot</text>
<text transform="translate(0 533.7) scale(1 1.035)" x="697.5" y="0" font-size="37.22" textLength="134.0" lengthAdjust="spacingAndGlyphs" fill="#30708b">people</text>
<text transform="translate(0 537.6) scale(1 1.035)" x="842.9" y="0" font-size="19.76" textLength="47.4" lengthAdjust="spacingAndGlyphs" fill="#269b87">back</text>
<text transform="translate(0 539.6) scale(1 1.015)" x="785.0" y="0" font-size="8.63" textLength="25.9" lengthAdjust="spacingAndGlyphs" fill="#451462">money</text>
<text transform="translate(0 549.3) scale(1 1.015)" x="705.6" y="0" font-size="17.97" textLength="43.1" lengthAdjust="spacingAndGlyphs" fill="#cadf2e">come</text>
<text transform="translate(0 549.3) scale(1 1.015)" x="750.8" y="0" font-size="8.98" textLength="21.6" lengthAdjust="spacingAndGlyphs" fill="#2d778c">care</text>
<text transform="translate(0 547.3) scale(1 1.035)" x="818.3" y="0" font-size="8.75" textLength="36.7" lengthAdjust="spacingAndGlyphs" fill="#3f4a85">working</text>
<text transform="translate(0 548.3) scale(1 1.035)" x="859.6" y="0" font-size="11.85" textLength="28.4" lengthAdjust="spacingAndGlyphs" fill="#461e6b">look</text>
<text transform="translate(0 558.0) scale(1 1.035)" x="712.8" y="0" font-size="8.69" textLength="31.3" lengthAdjust="spacingAndGlyphs" fill="#2b7c8c">social</text>
<text transform="translate(0 560.0) scale(1 1.015)" x="753.7" y="0" font-size="8.92" textLength="26.7" lengthAdjust="spacingAndGlyphs" fill="#37b17b">great</text>
<text transform="translate(0 564.8) scale(1 1.035)" x="777.1" y="0" font-size="25.83" textLength="77.5" lengthAdjust="spacingAndGlyphs" fill="#2d778c">thing</text>
<text transform="translate(0 564.8) scale(1 1.015)" x="859.6" y="0" font-size="12.98" textLength="31.2" lengthAdjust="spacingAndGlyphs" fill="#90d349">many</text>
<text transform="translate(0 572.6) scale(1 1.035)" x="730.3" y="0" font-size="16.91" textLength="40.6" lengthAdjust="spacingAndGlyphs" fill="#35638b">take</text>
<text transform="translate(0 571.6) scale(1 1.035)" x="861.5" y="0" font-size="8.69" textLength="20.8" lengthAdjust="spacingAndGlyphs" fill="#326b8b">find</text>
<text transform="translate(0 574.5) scale(1 1.015)" x="802.1" y="0" font-size="12.13" textLength="29.1" lengthAdjust="spacingAndGlyphs" fill="#b0db36">aint</text>
<text transform="translate(0 601.7) scale(1 1.035)" x="761.9" y="0" font-size="13.12" textLength="31.5" lengthAdjust="spacingAndGlyphs" fill="#62c664">wish</text>
<text transform="translate(0 609.5) scale(1 1.015)" x="761.2" y="0" font-size="8.46" textLength="35.5" lengthAdjust="spacingAndGlyphs" fill="#2d778c">twitter</text>
<text transform="translate(0 619.2) scale(1 1.015)" x="762.3" y="0" font-size="14.00" textLength="25.2" lengthAdjust="spacingAndGlyphs" fill="#aad93a">man</text>
<text transform="translate(0 635.0) scale(1 1.035)" x="725.2" y="0" font-size="12.97" textLength="54.5" lengthAdjust="spacingAndGlyphs" fill="#52c06c">fucking</text>
<text transform="translate(0 646.0) scale(1 1.015)" x="793.0" y="0" font-size="30.03" textLength="36.0" lengthAdjust="spacingAndGlyphs" fill="#dce22e">go</text>
<text transform="translate(0 645.8) scale(1 1.035)" x="845.7" y="0" font-size="19.00" textLength="45.6" lengthAdjust="spacingAndGlyphs" fill="#461e6b">tell</text>
<text transform="translate(0 653.5) scale(1 1.035)" x="731.3" y="0" font-size="17.68" textLength="53.0" lengthAdjust="spacingAndGlyphs" fill="#bddd2e">thank</text>
<text transform="translate(0 663.3) scale(1 1.015)" x="382.0" y="0" font-size="24.69" textLength="44.4" lengthAdjust="spacingAndGlyphs" fill="#414484">see</text>
<text transform="translate(0 661.4) scale(1 1.015)" x="443.9" y="0" font-size="12.51" textLength="30.0" lengthAdjust="spacingAndGlyphs" fill="#268a8b">cure</text>
<text transform="translate(0 666.2) scale(1 1.015)" x="475.8" y="0" font-size="17.80" textLength="42.7" lengthAdjust="spacingAndGlyphs" fill="#259489">want</text>
<text transform="translate(0 672.8) scale(1 1.035)" x="401.0" y="0" font-size="8.82" textLength="26.5" lengthAdjust="spacingAndGlyphs" fill="#2b7c8c">watch</text>
<text transform="translate(0 687.0) scale(1 1.05)" x="425.8" y="0" font-size="37.04" textLength="44.5" lengthAdjust="spacingAndGlyphs" fill="#375f8a">Im</text>
<text transform="translate(0 680.4) scale(1 1.015)" x="468.7" y="0" font-size="17.20" textLength="41.3" lengthAdjust="spacingAndGlyphs" fill="#bddd2e">test</text>
<text transform="translate(0 688.0) scale(1 1.035)" x="389.9" y="0" font-size="20.56" textLength="37.0" lengthAdjust="spacingAndGlyphs" fill="#26a684">let</text>
<text transform="translate(0 688.0) scale(1 1.035)" x="510.8" y="0" font-size="12.43" textLength="37.3" lengthAdjust="spacingAndGlyphs" fill="#375f8a">bitch</text>
<text transform="translate(0 699.4) scale(1 1.035)" x="368.0" y="0" font-size="13.84" textLength="58.1" lengthAdjust="spacingAndGlyphs" fill="#89d24d">already</text>
<text transform="translate(0 695.6) scale(1 1.015)" x="432.4" y="0" font-size="13.65" textLength="49.2" lengthAdjust="spacingAndGlyphs" fill="#62c664">anyone</text>
<text transform="translate(0 721.2) scale(1 1.015)" x="423.1" y="0" font-size="31.51" textLength="56.7" lengthAdjust="spacingAndGlyphs" fill="#3f4a85">say</text>
<text transform="translate(0 738.5) scale(1 1.08)" x="478.0" y="0" font-size="66.64" textLength="279.9" lengthAdjust="spacingAndGlyphs" fill="#44357b">COVID19</text>
<text transform="translate(0 711.7) scale(1 1.05)" x="495.5" y="0" font-size="12.78" textLength="23.0" lengthAdjust="spacingAndGlyphs" fill="#37b17b">Ive</text>
<text transform="translate(0 720.2) scale(1 1.035)" x="362.8" y="0" font-size="19.11" textLength="57.3" lengthAdjust="spacingAndGlyphs" fill="#26a684">right</text>
<text transform="translate(0 729.7) scale(1 1.035)" x="349.8" y="0" font-size="11.72" textLength="35.2" lengthAdjust="spacingAndGlyphs" fill="#2d778c">thats</text>
<text transform="translate(0 730.6) scale(1 1.035)" x="400.3" y="0" font-size="11.45" textLength="34.4" lengthAdjust="spacingAndGlyphs" fill="#269b87">funny</text>
<text transform="translate(0 736.3) scale(1 1.015)" x="436.1" y="0" font-size="14.00" textLength="25.2" lengthAdjust="spacingAndGlyphs" fill="#2f728c">way</text>
<text transform="translate(0 740.1) scale(1 1.035)" x="462.6" y="0" font-size="8.97" textLength="21.5" lengthAdjust="spacingAndGlyphs" fill="#89d24d">kill</text>
<text transform="translate(0 751.5) scale(1 1.035)" x="340.7" y="0" font-size="28.36" textLength="85.1" lengthAdjust="spacingAndGlyphs" fill="#bddd2e">today</text>
<text transform="translate(0 760.0) scale(1 1.035)" x="439.4" y="0" font-size="27.73" textLength="66.6" lengthAdjust="spacingAndGlyphs" fill="#451462">need</text>
<text transform="translate(0 747.7) scale(1 1.035)" x="506.3" y="0" font-size="11.31" textLength="40.7" lengthAdjust="spacingAndGlyphs" fill="#2d778c">health</text>
<text transform="translate(0 759.1) scale(1 1.035)" x="507.3" y="0" font-size="13.36" textLength="40.1" lengthAdjust="spacingAndGlyphs" fill="#3c5187">fight</text>
<text transform="translate(0 762.9) scale(1 1.035)" x="361.2" y="0" font-size="13.77" textLength="33.0" lengthAdjust="spacingAndGlyphs" fill="#89d24d">week</text>
<text transform="translate(0 673.8) scale(1 1.035)" x="613.0" y="0" font-size="47.82" textLength="114.8" lengthAdjust="spacingAndGlyphs" fill="#29838b">fool</text>
<text transform="translate(0 677.6) scale(1 1.035)" x="521.5" y="0" font-size="32.96" textLength="79.1" lengthAdjust="spacingAndGlyphs" fill="#d0e02e">shit</text>
<text transform="translate(0 670.0) scale(1 1.035)" x="591.1" y="0" font-size="8.56" textLength="25.7" lengthAdjust="spacingAndGlyphs" fill="#451462">maybe</text>
<text transform="translate(0 684.2) scale(1 1.015)" x="599.9" y="0" font-size="14.04" textLength="59.0" lengthAdjust="spacingAndGlyphs" fill="#462b76">someone</text>
<text transform="translate(0 686.9) scale(1 1.035)" x="679.3" y="0" font-size="14.15" textLength="51.0" lengthAdjust="spacingAndGlyphs" fill="#62c664">tested</text>
<text transform="translate(0 688.0) scale(1 1.035)" x="545.9" y="0" font-size="12.18" textLength="43.9" lengthAdjust="spacingAndGlyphs" fill="#269b87">number</text>
<text transform="translate(0 761.9) scale(1 1.035)" x="546.6" y="0" font-size="25.21" textLength="75.6" lengthAdjust="spacingAndGlyphs" fill="#cadf2e">think</text>
<text transform="translate(0 761.9) scale(1 1.035)" x="635.3" y="0" font-size="25.93" textLength="62.2" lengthAdjust="spacingAndGlyphs" fill="#26a185">dont</text>
<text transform="translate(0 763.7) scale(1 1.035)" x="694.1" y="0" font-size="13.53" textLength="48.7" lengthAdjust="spacingAndGlyphs" fill="#b0db36">friend</text>
<text transform="translate(0 658.7) scale(1 1.015)" x="834.5" y="0" font-size="17.68" textLength="42.4" lengthAdjust="spacingAndGlyphs" fill="#268a8b">stop</text>
<text transform="translate(0 662.6) scale(1 1.035)" x="762.4" y="0" font-size="12.45" textLength="29.9" lengthAdjust="spacingAndGlyphs" fill="#414484">long</text>
<text transform="translate(0 662.6) scale(1 1.035)" x="791.3" y="0" font-size="13.28" textLength="31.9" lengthAdjust="spacingAndGlyphs" fill="#461e6b">done</text>
<text transform="translate(0 673.3) scale(1 1.035)" x="847.8" y="0" font-size="13.20" textLength="31.7" lengthAdjust="spacingAndGlyphs" fill="#269b87">life</text>
<text transform="translate(0 696.6) scale(1 1.035)" x="782.1" y="0" font-size="39.70" textLength="95.3" lengthAdjust="spacingAndGlyphs" fill="#efe42e">joke</text>
<text transform="translate(0 718.0) scale(1 1.015)" x="810.4" y="0" font-size="34.22" textLength="82.1" lengthAdjust="spacingAndGlyphs" fill="#269f86">case</text>
<text transform="translate(0 719.0) scale(1 1.015)" x="776.8" y="0" font-size="12.93" textLength="23.3" lengthAdjust="spacingAndGlyphs" fill="#451462">ass</text>
<text transform="translate(0 729.7) scale(1 1.035)" x="777.5" y="0" font-size="12.87" textLength="30.9" lengthAdjust="spacingAndGlyphs" fill="#9dd642">work</text>
<text transform="translate(0 729.7) scale(1 1.015)" x="809.6" y="0" font-size="12.48" textLength="37.4" lengthAdjust="spacingAndGlyphs" fill="#35638b">wanna</text>
<text transform="translate(0 729.7) scale(1 1.035)" x="863.1" y="0" font-size="11.34" textLength="27.2" lengthAdjust="spacingAndGlyphs" fill="#461e6b">hand</text>
<text transform="translate(0 752.0) scale(1 1.05)" x="709.9" y="0" font-size="16.60" textLength="49.8" lengthAdjust="spacingAndGlyphs" fill="#b0db36">India</text>
<text transform="translate(0 756.9) scale(1 1.035)" x="789.0" y="0" font-size="32.80" textLength="98.4" lengthAdjust="spacingAndGlyphs" fill="#29838b">death</text>
<text transform="translate(0 765.6) scale(1 1.035)" x="794.5" y="0" font-size="8.71" textLength="41.8" lengthAdjust="spacingAndGlyphs" fill="#35638b">outbreak</text>
<text transform="translate(0 503.5) scale(1 1.015)" x="453.9" y="0" font-size="106.57" textLength="383.7" lengthAdjust="spacingAndGlyphs" fill="#9dd642">corona</text>
<text transform="translate(589.6 521.2) rotate(-90) scale(1 1.015)" x="0" y="0" font-size="13.76" textLength="82.5" lengthAdjust="spacingAndGlyphs" fill="#37b17b">quarantine</text>
<text transform="translate(550.8 483.3) rotate(-90) scale(1 1.035)" x="0" y="0" font-size="14.22" textLength="25.6" lengthAdjust="spacingAndGlyphs" fill="#48bd72">die</text>
<text transform="translate(717.3 513.3) rotate(-90) scale(1 1.035)" x="0" y="0" font-size="12.02" textLength="64.9" lengthAdjust="spacingAndGlyphs" fill="#433e80">confirmed</text>
<text transform="translate(750.7 507.8) rotate(-90) scale(1 1.015)" x="0" y="0" font-size="12.55" textLength="52.7" lengthAdjust="spacingAndGlyphs" fill="#35638b">waiting</text>
<text transform="translate(783.4 511.6) rotate(-90) scale(1 1.05)" x="0" y="0" font-size="13.41" textLength="64.4" lengthAdjust="spacingAndGlyphs" fill="#29838b">American</text>
<text transform="translate(353.0 545.0) rotate(-90) scale(1 1.05)" x="0" y="0" font-size="13.12" textLength="39.4" lengthAdjust="spacingAndGlyphs" fill="#258f8b">Happy</text>
<text transform="translate(390.7 533.8) rotate(-90) scale(1 1.015)" x="0" y="0" font-size="44.00" textLength="26.4" lengthAdjust="spacingAndGlyphs" fill="#462b76">u</text>
<text transform="translate(562.8 566.3) rotate(-90) scale(1 1.035)" x="0" y="0" font-size="19.44" textLength="46.7" lengthAdjust="spacingAndGlyphs" fill="#269b87">good</text>
<text transform="translate(445.6 617.8) rotate(-90) scale(1 1.015)" x="0" y="0" font-size="12.07" textLength="43.5" lengthAdjust="spacingAndGlyphs" fill="#29838b">crisis</text>
<text transform="translate(514.8 615.7) rotate(-90) scale(1 1.05)" x="0" y="0" font-size="9.30" textLength="27.9" lengthAdjust="spacingAndGlyphs" fill="#26a185">March</text>
<text transform="translate(540.4 617.7) rotate(-90) scale(1 1.035)" x="0" y="0" font-size="8.69" textLength="47.0" lengthAdjust="spacingAndGlyphs" fill="#269b87">something</text>
<text transform="translate(587.8 614.0) rotate(-90) scale(1 1.035)" x="0" y="0" font-size="8.55" textLength="41.0" lengthAdjust="spacingAndGlyphs" fill="#29838b">hospital</text>
<text transform="translate(640.5 626.2) rotate(-90) scale(1 1.015)" x="0" y="0" font-size="10.69" textLength="38.5" lengthAdjust="spacingAndGlyphs" fill="#2d778c">coming</text>
<text transform="translate(736.8 610.6) rotate(-90) scale(1 1.035)" x="0" y="0" font-size="12.89" textLength="30.9" lengthAdjust="spacingAndGlyphs" fill="#b0db36">well</text>
<text transform="translate(746.0 623.2) rotate(-90) scale(1 1.035)" x="0" y="0" font-size="11.39" textLength="47.8" lengthAdjust="spacingAndGlyphs" fill="#62c664">thought</text>
<text transform="translate(824.2 605.3) rotate(-90) scale(1 1.035)" x="0" y="0" font-size="11.93" textLength="28.6" lengthAdjust="spacingAndGlyphs" fill="#269b87">love</text>
<text transform="translate(844.3 621.2) rotate(-90) scale(1 1.015)" x="0" y="0" font-size="11.15" textLength="46.8" lengthAdjust="spacingAndGlyphs" fill="#326b8b">patient</text>
<text transform="translate(365.1 712.9) rotate(-90) scale(1 1.035)" x="0" y="0" font-size="34.10" textLength="81.8" lengthAdjust="spacingAndGlyphs" fill="#7ccf55">will</text>
<text transform="translate(378.4 687.6) rotate(-90) scale(1 1.035)" x="0" y="0" font-size="13.13" textLength="47.3" lengthAdjust="spacingAndGlyphs" fill="#89d24d">making</text>
<text transform="translate(608.6 714.2) rotate(-90) scale(1 1.08)" x="0" y="0" font-size="8.79" textLength="15.8" lengthAdjust="spacingAndGlyphs" fill="#269b87">USA</text>
<text transform="translate(639.9 731.3) rotate(-90) scale(1 1.035)" x="0" y="0" font-size="10.70" textLength="38.5" lengthAdjust="spacingAndGlyphs" fill="#395989">around</text>
<text transform="translate(888.4 701.1) rotate(-90) scale(1 1.05)" x="0" y="0" font-size="11.01" textLength="52.9" lengthAdjust="spacingAndGlyphs" fill="#2d778c">Covid_19</text>
<text transform="translate(749.2 688.3) rotate(-90) scale(1 1.015)" x="0" y="0" font-size="19.45" textLength="35.0" lengthAdjust="spacingAndGlyphs" fill="#89d24d">guy</text>
<text transform="translate(772.2 768.4) rotate(-90) scale(1 1.015)" x="0" y="0" font-size="20.92" textLength="100.4" lengthAdjust="spacingAndGlyphs" fill="#37b17b">positive</text>
<text transform="translate(714.8 740.4) rotate(-90) scale(1 1.015)" x="0" y="0" font-size="11.88" textLength="42.8" lengthAdjust="spacingAndGlyphs" fill="#89d24d">saying</text>
</g></g>
<rect x="1239.6" y="346.6" width="243.1" height="79.4" fill="#ffffff" />
<g>
<rect x="1266.4" y="351.5" width="213.7" height="0.7" fill="#dcdcdc" />
<rect x="1276.2" y="346.6" width="0.6" height="32.7" fill="#dedede" />
<rect x="1295.5" y="346.6" width="0.6" height="32.7" fill="#dedede" />
<rect x="1314.7" y="346.6" width="0.6" height="32.7" fill="#dedede" />
<rect x="1334.1000000000001" y="346.6" width="0.6" height="32.7" fill="#dedede" />
<rect x="1353.5" y="346.6" width="0.6" height="32.7" fill="#dedede" />
<rect x="1372.9" y="346.6" width="0.6" height="32.7" fill="#dedede" />
<rect x="1392.1000000000001" y="346.6" width="0.6" height="32.7" fill="#dedede" />
<rect x="1411.5" y="346.6" width="0.6" height="32.7" fill="#dedede" />
<rect x="1431.0" y="346.6" width="0.6" height="32.7" fill="#dedede" />
<rect x="1450.2" y="346.6" width="0.6" height="32.7" fill="#dedede" />
<rect x="1469.7" y="346.6" width="0.6" height="32.7" fill="#dedede" />
<rect x="1272.0" y="346.6" width="9" height="32.69999999999999" fill="#1f77b4" />
<rect x="1276.2" y="346.6" width="0.6" height="32.69999999999999" fill="#4d93c6" />
<rect x="1291.3" y="365.7" width="9" height="13.600000000000023" fill="#1f77b4" />
<rect x="1295.5" y="365.7" width="0.6" height="13.600000000000023" fill="#4d93c6" />
<rect x="1310.5" y="369" width="9" height="10.300000000000011" fill="#1f77b4" />
<rect x="1314.7" y="369" width="0.6" height="10.300000000000011" fill="#4d93c6" />
<rect x="1329.9" y="346.6" width="9" height="32.69999999999999" fill="#1f77b4" />
<rect x="1334.1000000000001" y="346.6" width="0.6" height="32.69999999999999" fill="#4d93c6" />
<rect x="1349.3" y="346.6" width="9" height="32.69999999999999" fill="#1f77b4" />
<rect x="1353.5" y="346.6" width="0.6" height="32.69999999999999" fill="#4d93c6" />
<rect x="1368.7" y="346.6" width="9" height="32.69999999999999" fill="#1f77b4" />
<rect x="1372.9" y="346.6" width="0.6" height="32.69999999999999" fill="#4d93c6" />
<rect x="1387.9" y="346.6" width="9" height="32.69999999999999" fill="#1f77b4" />
<rect x="1392.1000000000001" y="346.6" width="0.6" height="32.69999999999999" fill="#4d93c6" />
<rect x="1407.3" y="361.8" width="9" height="17.5" fill="#1f77b4" />
<rect x="1411.5" y="361.8" width="0.6" height="17.5" fill="#4d93c6" />
<rect x="1426.8" y="346.6" width="9" height="32.69999999999999" fill="#1f77b4" />
<rect x="1431.0" y="346.6" width="0.6" height="32.69999999999999" fill="#4d93c6" />
<rect x="1446.0" y="346.6" width="9" height="32.69999999999999" fill="#1f77b4" />
<rect x="1450.2" y="346.6" width="0.6" height="32.69999999999999" fill="#4d93c6" />
<rect x="1465.5" y="346.6" width="9" height="32.69999999999999" fill="#1f77b4" />
<rect x="1469.7" y="346.6" width="0.6" height="32.69999999999999" fill="#4d93c6" />
<rect x="1266.1" y="346.6" width="0.8" height="33.2" fill="#555" />
<rect x="1266.1" y="379" width="214.2" height="0.8" fill="#555" />
<rect x="1479.8" y="346.6" width="0.7" height="33.2" fill="#888" />
<text x="1263.3" y="354" font-size="5" fill="#333" text-anchor="end" font-family='"Liberation Sans",sans-serif'>500</text>
<text x="1263.3" y="381.3" font-size="5" fill="#333" text-anchor="end" font-family='"Liberation Sans",sans-serif'>0</text>
<text transform="translate(1278.3 383.5) rotate(-90)" text-anchor="end" font-size="5.4" fill="#222" font-family='"Liberation Sans",sans-serif' textLength="22.5" lengthAdjust="spacingAndGlyphs">optimistic</text>
<text transform="translate(1297.6 383.5) rotate(-90)" text-anchor="end" font-size="5.4" fill="#222" font-family='"Liberation Sans",sans-serif' textLength="18.0" lengthAdjust="spacingAndGlyphs">thankful</text>
<text transform="translate(1316.8 383.5) rotate(-90)" text-anchor="end" font-size="5.4" fill="#222" font-family='"Liberation Sans",sans-serif' textLength="22.5" lengthAdjust="spacingAndGlyphs">empathetic</text>
<text transform="translate(1336.2 383.5) rotate(-90)" text-anchor="end" font-size="5.4" fill="#222" font-family='"Liberation Sans",sans-serif' textLength="24.8" lengthAdjust="spacingAndGlyphs">pessimistic</text>
<text transform="translate(1355.6 383.5) rotate(-90)" text-anchor="end" font-size="5.4" fill="#222" font-family='"Liberation Sans",sans-serif' textLength="15.8" lengthAdjust="spacingAndGlyphs">anxious</text>
<text transform="translate(1375.0 383.5) rotate(-90)" text-anchor="end" font-size="5.4" fill="#222" font-family='"Liberation Sans",sans-serif' textLength="6.8" lengthAdjust="spacingAndGlyphs">sad</text>
<text transform="translate(1394.2 383.5) rotate(-90)" text-anchor="end" font-size="5.4" fill="#222" font-family='"Liberation Sans",sans-serif' textLength="15.8" lengthAdjust="spacingAndGlyphs">annoyed</text>
<text transform="translate(1413.6 383.5) rotate(-90)" text-anchor="end" font-size="5.4" fill="#222" font-family='"Liberation Sans",sans-serif' textLength="13.5" lengthAdjust="spacingAndGlyphs">denial</text>
<text transform="translate(1433.1 383.5) rotate(-90)" text-anchor="end" font-size="5.4" fill="#222" font-family='"Liberation Sans",sans-serif' textLength="18.0" lengthAdjust="spacingAndGlyphs">surprise</text>
<text transform="translate(1452.3 383.5) rotate(-90)" text-anchor="end" font-size="5.4" fill="#222" font-family='"Liberation Sans",sans-serif' textLength="33.8" lengthAdjust="spacingAndGlyphs">official_report</text>
<text transform="translate(1471.8 383.5) rotate(-90)" text-anchor="end" font-size="5.4" fill="#222" font-family='"Liberation Sans",sans-serif' textLength="13.5" lengthAdjust="spacingAndGlyphs">joking</text>
<text x="1373" y="422" font-size="6.5" fill="#222" text-anchor="middle" font-family='"Liberation Sans",sans-serif'>Label</text>
</g>
<rect x="1239.5" y="430.8" width="243.2" height="159.2" fill="#ffffff" />
<text x="1373" y="438.3" font-size="6" fill="#222" text-anchor="middle" font-family='"Liberation Sans",sans-serif' textLength="79" lengthAdjust="spacingAndGlyphs">Multiple label per comment</text>
<rect x="1267" y="459.09999999999997" width="212.5" height="0.7" fill="#e0e0e0" />
<rect x="1267" y="481.5" width="212.5" height="0.7" fill="#e0e0e0" />
<rect x="1267" y="503.7" width="212.5" height="0.7" fill="#e0e0e0" />
<rect x="1267" y="525.3000000000001" width="212.5" height="0.7" fill="#e0e0e0" />
<rect x="1267" y="547.7" width="212.5" height="0.7" fill="#e0e0e0" />
<rect x="1278.4" y="568" width="19.5" height="2.5" fill="#1f77b4" />
<path d="M1297.3 570.5 V447.7 H1319.4 V473 H1341 V570.5 Z" fill="#1f77b4"/>
<rect x="1267" y="441.8" width="212.5" height="128.7" fill="none" stroke="#444" stroke-width="0.7"/>
<rect x="1277" y="441.8" width="1.6" height="128.7" fill="#a8a8a8" />
<text x="1264.5" y="461.2" font-size="5.3" fill="#222" text-anchor="end" font-family='"Liberation Sans",sans-serif'>2500</text>
<text x="1264.5" y="483.6" font-size="5.3" fill="#222" text-anchor="end" font-family='"Liberation Sans",sans-serif'>2000</text>
<text x="1264.5" y="505.8" font-size="5.3" fill="#222" text-anchor="end" font-family='"Liberation Sans",sans-serif'>1500</text>
<text x="1264.5" y="527.4" font-size="5.3" fill="#222" text-anchor="end" font-family='"Liberation Sans",sans-serif'>1000</text>
<text x="1264.5" y="549.8" font-size="5.3" fill="#222" text-anchor="end" font-family='"Liberation Sans",sans-serif'>500</text>
<text x="1264.5" y="572.1" font-size="5.3" fill="#222" text-anchor="end" font-family='"Liberation Sans",sans-serif'>0</text>
<text transform="translate(1247.5 500) rotate(-90)" text-anchor="middle" font-size="5.8" fill="#222" font-family='"Liberation Sans",sans-serif'># of Occurrences</text>
<text x="1277.5" y="576.5" font-size="4.5" fill="#111" font-weight="bold" text-anchor="middle" font-family='"Liberation Sans",sans-serif'>3.00</text>
<circle cx="1277.7" cy="571.5" r="1" fill="#222"/>
<text x="1373" y="585.5" font-size="6.5" fill="#222" text-anchor="middle" font-family='"Liberation Sans",sans-serif'>No of labels</text>
<rect x="1240.2" y="594.7" width="241.6" height="79" fill="none"/>
<rect x="1239.5" y="594" width="243.4" height="180.8" fill="#2a8fd6" />
<rect x="1241" y="595.5" width="240.4" height="177.1" fill="#ffffff" />
<text x="1361" y="600.8" font-size="5" fill="#333" text-anchor="middle" font-family='"Liberation Sans",sans-serif'>Clean</text>
<rect x="1242.4" y="601.5" width="237.6" height="169.7" fill="#000" />
<defs><clipPath id="cc2"><rect x="1242.4" y="601.5" width="237.6" height="169.7"/></clipPath></defs>
<g clip-path="url(#cc2)"><use href="#cw" transform="translate(1242.4 601.5) scale(0.42619 0.42193) translate(-335.7 -365.5)"/></g>
<path d="M1487.8 354.3 L1491.4 350.8 L1495 354.3 Z" fill="#3b4750"/>
<rect x="1487.5" y="358.5" width="7.5" height="405" rx="3.7" fill="none" stroke="#2d3a42" stroke-width="1"/>
<rect x="1487.7" y="670.5" width="7.2" height="91" rx="3.6" fill="#8a9398"/>
<path d="M1487.8 767 L1491.4 770.5 L1495 767 Z" fill="#3b4750"/>
</svg>
</body></html>
